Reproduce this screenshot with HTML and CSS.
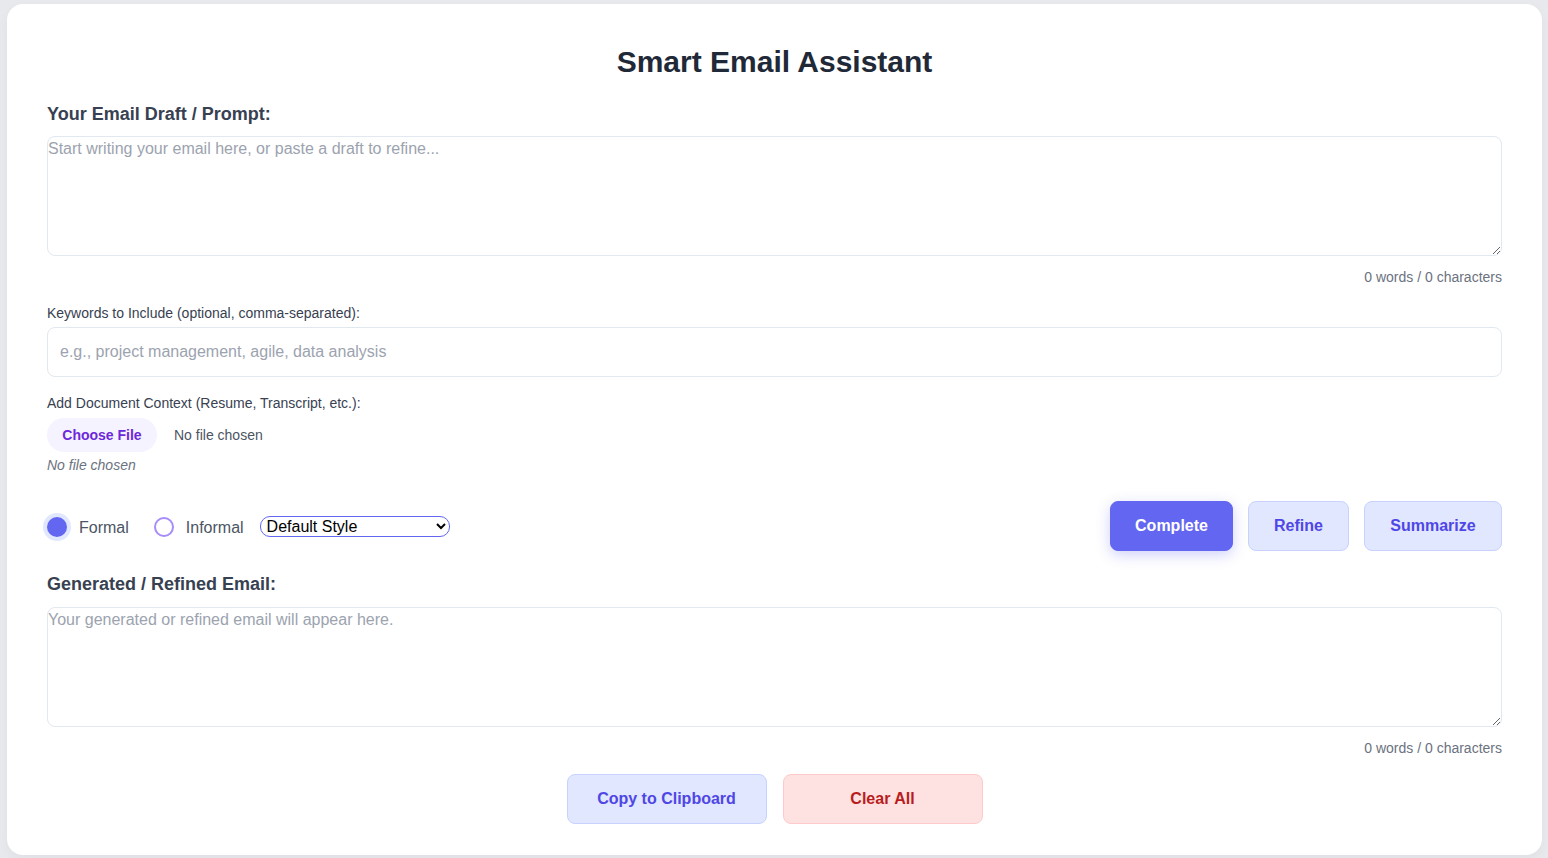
FILE: index.html
```html
<!DOCTYPE html>
<html lang="en">
<head>
<meta charset="utf-8">
<title>Smart Email Assistant</title>
<link rel="stylesheet" href="styles.css">
</head>
<body>
<div class="page">
  <main class="card">
    <h1 class="title">Smart Email Assistant</h1>

    <label class="section-label" for="draft">Your Email Draft / Prompt:</label>
    <textarea id="draft" class="area" placeholder="Start writing your email here, or paste a draft to refine..."></textarea>
    <div class="count">0 words / 0 characters</div>

    <label class="small-label" for="keywords">Keywords to Include (optional, comma-separated):</label>
    <input id="keywords" class="text-input" type="text" placeholder="e.g., project management, agile, data analysis">

    <div class="small-label doc-label">Add Document Context (Resume, Transcript, etc.):</div>
    <div class="file-row">
      <label class="file-btn">Choose File<input type="file" class="hidden-file"></label>
      <span class="file-name">No file chosen</span>
    </div>
    <div class="file-status">No file chosen</div>

    <div class="controls">
      <div class="options">
        <label class="radio"><input type="radio" name="tone" class="radio-input" checked><span>Formal</span></label>
        <label class="radio"><input type="radio" name="tone" class="radio-input"><span>Informal</span></label>
        <select class="style-select">
          <option>Default Style</option>
          <option>Concise</option>
          <option>Friendly</option>
        </select>
      </div>
      <div class="actions">
        <button class="btn btn-primary">Complete</button>
        <button class="btn btn-soft">Refine</button>
        <button class="btn btn-soft">Summarize</button>
      </div>
    </div>

    <label class="section-label" for="output">Generated / Refined Email:</label>
    <textarea id="output" class="area" placeholder="Your generated or refined email will appear here."></textarea>
    <div class="count">0 words / 0 characters</div>

    <div class="bottom-actions">
      <button class="btn btn-wide btn-soft">Copy to Clipboard</button>
      <button class="btn btn-wide btn-danger">Clear All</button>
    </div>
  </main>
</div>
</body>
</html>
```

FILE: styles.css
```css
* { box-sizing: border-box; }

html, body {
  margin: 0;
  padding: 0;
  height: 100%;
  overflow: hidden;
}

body {
  background: #e8e9ed;
  font-family: "Liberation Sans", Arial, sans-serif;
  color: #374151;
}

.page {
  padding: 4px 6px 0 7px;
}

.card {
  background: #ffffff;
  border-radius: 16px;
  padding: 44px 40px 31px;
  display: flex;
  flex-direction: column;
  box-shadow: 0 4px 12px rgba(0, 0, 0, 0.04);
}

.title {
  margin: -4px 0 20px;
  font-size: 30px;
  line-height: 36px;
  font-weight: 700;
  text-align: center;
  color: #1f2937;
}

.section-label {
  font-size: 18px;
  line-height: 28px;
  font-weight: 700;
  color: #374151;
  margin-bottom: 8px;
}

.area {
  display: block;
  width: 100%;
  height: 120px;
  border: 1px solid #e2e8f0;
  border-radius: 8px;
  padding: 2px 0;
  font-family: "Liberation Sans", Arial, sans-serif;
  font-size: 16px;
  line-height: 19px;
  color: #111827;
  resize: vertical;
  outline: none;
}

.area::placeholder,
.text-input::placeholder {
  color: #9ca3af;
}

.count {
  margin-top: 11px;
  text-align: right;
  font-size: 14px;
  line-height: 20px;
  color: #6b7280;
}

.small-label {
  display: block;
  margin-top: 16px;
  font-size: 14px;
  line-height: 20px;
  color: #374151;
  margin-bottom: 4px;
}

.text-input {
  display: block;
  width: 100%;
  height: 50px;
  border: 1px solid #e2e8f0;
  border-radius: 8px;
  padding: 0 12px;
  font-family: "Liberation Sans", Arial, sans-serif;
  font-size: 16px;
  color: #111827;
  outline: none;
}

.doc-label {
  margin-bottom: 5px;
}

.file-row {
  display: flex;
  align-items: center;
  gap: 17px;
}

.file-btn {
  display: inline-flex;
  align-items: center;
  justify-content: center;
  height: 34px;
  width: 110px;
  border-radius: 9999px;
  background: #f5f3ff;
  color: #6d28d9;
  font-size: 14px;
  font-weight: 700;
  cursor: pointer;
}

.hidden-file {
  display: none;
}

.file-name {
  font-size: 14px;
  color: #4b5563;
}

.file-status {
  margin-top: 3px;
  font-size: 14px;
  line-height: 20px;
  font-style: italic;
  color: #6b7280;
}

.controls {
  margin-top: 26px;
  display: flex;
  align-items: center;
  justify-content: space-between;
}

.options {
  display: flex;
  align-items: center;
  padding-top: 1px;
}

.radio {
  display: flex;
  align-items: center;
  gap: 12px;
  font-size: 16px;
  color: #4b5563;
  margin-right: 25px;
}

.radio span {
  padding-top: 2px;
}

.radio:nth-child(2) {
  margin-right: 16px;
}

.radio-input {
  appearance: none;
  -webkit-appearance: none;
  margin: 0;
  width: 20px;
  height: 20px;
  border-radius: 50%;
  border: 2px solid #a78bfa;
  background: #ffffff;
}

.radio-input:checked {
  border: none;
  background: #6366f1;
  box-shadow: 0 0 0 4px #e0e7ff;
}

.style-select {
  width: 190px;
  height: 21px;
  border: 1px solid #6366f1;
  border-radius: 10px;
  background: #ffffff;
  font-family: "Liberation Sans", Arial, sans-serif;
  font-size: 16px;
  color: #000000;
  padding: 0 2px;
}

.actions {
  display: flex;
  gap: 15px;
}

.btn {
  height: 50px;
  padding: 0 24px;
  border-radius: 8px;
  font-family: "Liberation Sans", Arial, sans-serif;
  font-size: 16px;
  font-weight: 700;
  cursor: pointer;
}

.btn-primary {
  background: #6366f1;
  border: 1px solid #6366f1;
  color: #ffffff;
  box-shadow: 0 4px 14px rgba(99, 102, 241, 0.3);
  width: 123px;
}

.btn-soft {
  background: #e0e7ff;
  border: 1px solid #c7d2fe;
  color: #4f46e5;
}

.actions .btn-soft:nth-child(2) { width: 101px; }
.actions .btn-soft:nth-child(3) { width: 138px; }

.controls + .section-label {
  margin-top: 19px;
  margin-bottom: 9px;
}

.bottom-actions {
  margin-top: 16px;
  display: flex;
  justify-content: center;
  gap: 16px;
}

.btn-wide {
  width: 200px;
}

.btn-danger {
  background: #fee2e2;
  border: 1px solid #fecaca;
  color: #b91c1c;
}
```
